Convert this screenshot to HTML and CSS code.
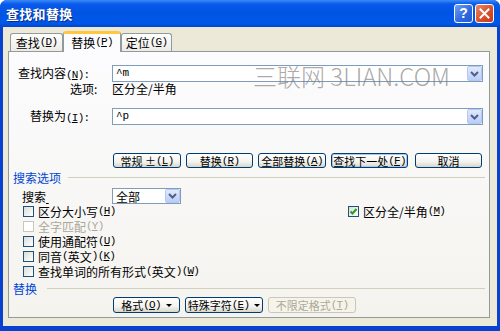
FILE: index.html
```html
<!DOCTYPE html>
<html lang="zh-CN">
<head>
  <meta charset="UTF-8">
  <title>查找和替换</title>
  <link rel="stylesheet" href="styles.css">
</head>
<body>
  <div class="window">
    <div class="titlebar">
      <span class="title">查找和替换</span>
      <div class="title-buttons">
        <span class="tb-btn help">?</span>
        <span class="tb-btn close">
          <svg width="11" height="11" viewBox="0 0 11 11"><path d="M1.5 1.5 L9.5 9.5 M9.5 1.5 L1.5 9.5" stroke="#fff" stroke-width="2" stroke-linecap="square"/></svg>
        </span>
      </div>
    </div>

    <div class="face">
      <div class="tabs">
        <div class="tab tab-find">查找<span class="key">(<u>D</u>)</span></div>
        <div class="tab tab-replace active">替换<span class="key">(<u>P</u>)</span></div>
        <div class="tab tab-goto">定位<span class="key">(<u>G</u>)</span></div>
      </div>

      <div class="panel">
        <div class="watermark">三联网 3LIAN.COM</div>

        <div class="field">
          <span class="lbl lbl-find">查找内容<span class="key">(<u>N</u>):</span></span>
          <div class="combo combo-wide">
            <span class="combo-text mono">^m</span>
            <span class="drop"><svg width="9" height="6" viewBox="0 0 9 6"><path d="M1 1 L4.5 4.5 L8 1" fill="none" stroke="#4D6185" stroke-width="2"/></svg></span>
          </div>
        </div>
        <div class="note">
          <span class="lbl lbl-opt">选项:</span>
          <span>区分全/半角</span>
        </div>
        <div class="field field-replace">
          <span class="lbl lbl-rep">替换为<span class="key">(<u>I</u>):</span></span>
          <div class="combo combo-wide">
            <span class="combo-text mono">^p</span>
            <span class="drop"><svg width="9" height="6" viewBox="0 0 9 6"><path d="M1 1 L4.5 4.5 L8 1" fill="none" stroke="#4D6185" stroke-width="2"/></svg></span>
          </div>
        </div>

        <div class="actions">
          <button class="btn w68">常规 ± <span class="key">(<u>L</u>)</span></button>
          <button class="btn w67">替换<span class="key">(<u>R</u>)</span></button>
          <button class="btn w68">全部替换<span class="key">(<u>A</u>)</span></button>
          <button class="btn w77 default">查找下一处<span class="key">(<u>F</u>)</span></button>
          <button class="btn w67 cancel">取消</button>
        </div>

        <div class="section section-search">搜索选项</div>
        <div class="search-row">
          <span class="lbl lbl-search">搜索<u>&nbsp;</u></span>
          <div class="combo combo-small">
            <span class="combo-text">全部</span>
            <span class="drop"><svg width="9" height="6" viewBox="0 0 9 6"><path d="M1 1 L4.5 4.5 L8 1" fill="none" stroke="#4D6185" stroke-width="2"/></svg></span>
          </div>
        </div>

        <div class="check-row">
          <span class="check check-left"><span class="box"></span>区分大小写<span class="key">(<u>H</u>)</span></span>
          <span class="check"><span class="box checked"><svg width="9" height="9" viewBox="0 0 9 9"><path d="M1.5 4.5 L3.5 6.5 L7.5 2" fill="none" stroke="#21A121" stroke-width="2"/></svg></span>区分全/半角<span class="key">(<u>M</u>)</span></span>
        </div>
        <div class="check-row disabled">
          <span class="check"><span class="box"></span>全字匹配<span class="key">(<u>Y</u>)</span></span>
        </div>
        <div class="check-row">
          <span class="check"><span class="box"></span>使用通配符<span class="key">(<u>U</u>)</span></span>
        </div>
        <div class="check-row">
          <span class="check"><span class="box"></span>同音<span class="key">(</span>英文<span class="key">)(<u>K</u>)</span></span>
        </div>
        <div class="check-row">
          <span class="check"><span class="box"></span>查找单词的所有形式<span class="key">(</span>英文<span class="key">)(<u>W</u>)</span></span>
        </div>

        <div class="section section-replace">替换</div>
        <div class="bottom-actions">
          <button class="btn w67">格式<span class="key">(<u>O</u>)</span><span class="caret"></span></button>
          <button class="btn w78">特殊字符<span class="key">(<u>E</u>)</span><span class="caret"></span></button>
          <button class="btn w88" disabled>不限定格式<span class="key">(<u>T</u>)</span></button>
        </div>
      </div>
    </div>
  </div>
</body>
</html>
```

FILE: styles.css
```css
body {
  margin: 0;
  background: #fff;
  font-family: "Noto Sans CJK SC", sans-serif;
  font-size: 12px;
  line-height: 13px;
  color: #000;
}
.window {
  width: 500px;
  height: 331px;
  display: flex;
  flex-direction: column;
  background: #0842D0;
  border-radius: 7px 7px 0 0;
  overflow: hidden;
}
.titlebar {
  flex: none;
  height: 27px;
  display: flex;
  align-items: center;
  justify-content: space-between;
  padding: 0 6px 0 6px;
  background: linear-gradient(#3C8CF6, #0A5AEB 4px, #0054E3 45%, #0058E8 85%, #0046CF);
}
.title {
  color: #fff;
  font-weight: bold;
  font-size: 13px;
  letter-spacing: 0.3px;
  text-shadow: 1px 1px 0 #0A2B8C;
}
.title-buttons {
  display: flex;
  gap: 2px;
}
.tb-btn {
  width: 19px;
  height: 19px;
  box-sizing: border-box;
  border: 1px solid #fff;
  border-radius: 3px;
  display: flex;
  align-items: center;
  justify-content: center;
  color: #fff;
  font-family: "Liberation Sans", sans-serif;
  font-weight: bold;
  font-size: 14px;
}
.help {
  background: linear-gradient(135deg, #6FA2F7, #2E67DF 60%, #2459D0);
}
.close {
  background: linear-gradient(135deg, #EC8A66, #D9502C 55%, #C23A1A);
}
.face {
  flex: 1;
  margin: 0 3px 5px;
  background: #ECE9D8;
  padding: 4px 0 0 5px;
}
.tabs {
  display: flex;
  align-items: flex-end;
  height: 20px;
  margin-left: 2px;
  position: relative;
  z-index: 1;
}
.tab {
  height: 18px;
  box-sizing: border-box;
  border: 1px solid #919B9C;
  border-bottom: none;
  border-radius: 3px 3px 0 0;
  background: linear-gradient(#fff, #ECEBE6);
  display: flex;
  align-items: center;
  justify-content: center;
  white-space: nowrap;
}
.tab-find { width: 53px; }
.tab-replace { width: 58px; }
.tab-goto { width: 51px; }
.tab.active {
  height: 21px;
  margin-bottom: -1px;
  border-top: 3px solid #FFC83C;
  background: #FCFCFE;
  padding-bottom: 2px;
}
.key {
  font-family: "Liberation Mono", monospace;
  font-size: 11px;
  letter-spacing: -0.8px;
}
.mono {
  font-family: "Liberation Mono", monospace;
  font-size: 11px;
}
.panel {
  position: relative;
  width: 482px;
  height: 267px;
  box-sizing: border-box;
  border: 1px solid #919B9C;
  background: linear-gradient(#FCFCFE, #F4F3EE);
  padding: 13px 4px 4px 4px;
}
.watermark {
  position: absolute;
  left: 244px;
  top: 10px;
  font-size: 24px;
  line-height: 28px;
  font-weight: 300;
  color: rgba(120, 120, 120, 0.65);
  pointer-events: none;
  white-space: nowrap;
}
.field {
  display: flex;
  align-items: center;
  height: 17px;
}
.lbl {
  flex: none;
  width: 99px;
  box-sizing: border-box;
  white-space: nowrap;
}
.lbl-find { padding-left: 5px; }
.lbl-opt { padding-left: 57px; }
.lbl-rep { padding-left: 17px; }
.lbl-search { padding-left: 9px; }
.combo {
  height: 17px;
  box-sizing: border-box;
  border: 1px solid #7F9DB9;
  background: #fff;
  display: flex;
  align-items: center;
  justify-content: space-between;
}
.combo-wide { width: 371px; }
.combo-small { width: 69px; height: 16px; }
.combo-text {
  padding-left: 3px;
}
.drop {
  width: 15px;
  height: 100%;
  box-sizing: border-box;
  border: 1px solid #B5C8F3;
  border-radius: 2px;
  background: linear-gradient(#E1EAFE, #B9CDF7);
  display: flex;
  align-items: center;
  justify-content: center;
}
.note {
  height: 13px;
  display: flex;
  align-items: center;
}
.field-replace {
  margin-top: 13px;
}
.actions {
  display: flex;
  gap: 5px;
  margin: 28px 0 0 100px;
}
.btn {
  height: 15px;
  box-sizing: border-box;
  padding: 0;
  border: 1px solid #003C74;
  border-radius: 3px;
  background: linear-gradient(#fff, #F3F3EF 60%, #D8D5CA);
  font-family: "Noto Sans CJK SC", sans-serif;
  font-size: 11px;
  line-height: 12px;
  color: #000;
  display: flex;
  align-items: center;
  justify-content: center;
  white-space: nowrap;
  overflow: hidden;
}
.w67 { width: 67px; }
.w68 { width: 68px; }
.w77 { width: 77px; }
.w78 { width: 78px; }
.w88 { width: 88px; }
.cancel { margin-left: 2px; }
.btn.default {
  box-shadow: inset 0 0 0 1px #A8C4F0;
}
.btn:disabled {
  color: #ACA899;
  border-color: #C9C7BA;
  background: #F5F4EA;
}
.caret {
  width: 0;
  height: 0;
  margin-left: 5px;
  border-left: 3px solid transparent;
  border-right: 3px solid transparent;
  border-top: 3px solid #000;
}
.section {
  display: flex;
  align-items: center;
  height: 12px;
  margin-top: 3px;
  color: #0046D5;
}
.section::after {
  content: "";
  flex: 1;
  border-top: 1px solid #D0D0BF;
  margin-left: 7px;
}
.section-replace::after {
  margin-left: 10px;
}
.search-row {
  display: flex;
  align-items: center;
  height: 16px;
  margin-top: 5px;
}
.check-row {
  display: flex;
  align-items: center;
  height: 15px;
}
.check {
  display: flex;
  align-items: center;
  margin-left: 10px;
  white-space: nowrap;
}
.check-left {
  width: 315px;
}
.box {
  width: 11px;
  height: 11px;
  box-sizing: border-box;
  margin-right: 4px;
  border: 1px solid #1C5180;
  background: linear-gradient(135deg, #DCDCD7, #fff);
  display: flex;
  align-items: center;
  justify-content: center;
}
.disabled {
  color: #ACA899;
}
.disabled .box {
  border-color: #CAC8BB;
  background: #fff;
}
.bottom-actions {
  display: flex;
  gap: 5px;
  margin: 3px 0 0 100px;
}
.bottom-actions .btn {
  height: 16px;
}
```
